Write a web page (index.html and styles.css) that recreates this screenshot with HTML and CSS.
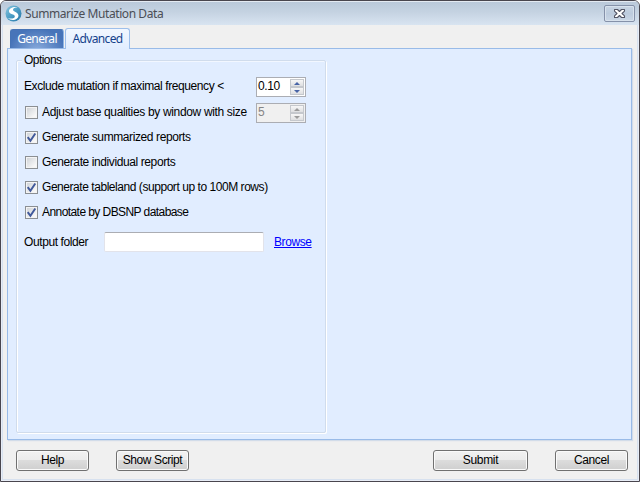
FILE: index.html
```html
<!DOCTYPE html>
<html lang="en">
<head>
<meta charset="utf-8">
<title>Summarize Mutation Data</title>
<link rel="stylesheet" href="styles.css">
</head>
<body>
<div class="window">
  <header class="titlebar">
    <svg class="logo" width="17" height="17" viewBox="0 0 17 17">
      <defs><linearGradient id="lg" x1="0" y1="0" x2="1" y2="1"><stop offset="0" stop-color="#8cc7df"/><stop offset=".5" stop-color="#4b9dc5"/><stop offset="1" stop-color="#2877a6"/></linearGradient></defs>
      <circle cx="8.5" cy="8.5" r="8" fill="url(#lg)"/>
      <path d="M12.5 2.2C8 1.3 3.6 3.6 4 6.5C4.5 9.7 10 8.9 9.8 11.4C9.7 13.2 7 14.3 2.5 13.1C7.5 17.1 14 14.2 13.4 10.3C12.8 6.7 7.9 7.1 8 4.8C8.1 3.3 9.7 2.4 12.5 2.2Z" fill="#fff"/>
    </svg>
    <h1 class="title">Summarize Mutation Data</h1>
    <button class="close" aria-label="Close">
      <svg width="13" height="11" viewBox="0 0 13 11"><path d="M1.5 1.5h3l2 2 2-2h3v1.7L9 5.5l2.5 2.3v1.7h-3l-2-2-2 2h-3V7.8L4 5.5 1.5 3.2Z" fill="#fff" stroke="#535666" stroke-width="1.1" stroke-linejoin="round"/></svg>
    </button>
  </header>
  <nav class="tabs">
    <div class="tab general"><span>General</span></div>
    <div class="tab advanced"><span>Advanced</span></div>
  </nav>
  <main class="panel">
    <fieldset class="options">
      <legend><span>Options</span></legend>
      <div class="row first">
        <span class="text exclude">Exclude mutation if maximal frequency &lt;</span>
        <div class="spinner"><span class="value">0.10</span><span class="arrows"><i class="up"></i><i class="down"></i></span></div>
      </div>
      <div class="row second">
        <span class="check"></span><span class="text adjust">Adjust base qualities by window with size</span>
        <div class="spinner disabled"><span class="value">5</span><span class="arrows"><i class="up"></i><i class="down"></i></span></div>
      </div>
      <div class="row third"><span class="check"><svg viewBox="0 0 9 9"><path d="M1.4 4.2 3.6 7.2 7.6 1.2"/></svg></span><span class="text">Generate summarized reports</span></div>
      <div class="row"><span class="check"></span><span class="text">Generate individual reports</span></div>
      <div class="row"><span class="check"><svg viewBox="0 0 9 9"><path d="M1.4 4.2 3.6 7.2 7.6 1.2"/></svg></span><span class="text tableland">Generate tableland (support up to 100M rows)</span></div>
      <div class="row"><span class="check"><svg viewBox="0 0 9 9"><path d="M1.4 4.2 3.6 7.2 7.6 1.2"/></svg></span><span class="text annotate">Annotate by DBSNP database</span></div>
      <div class="row output">
        <span class="text folder">Output folder</span><input class="field" type="text" aria-label="Output folder"><a class="browse" href="#">Browse</a>
      </div>
    </fieldset>
  </main>
  <footer class="actions">
    <button class="button">Help</button>
    <button class="button script">Show Script</button>
    <button class="button submit">Submit</button>
    <button class="button cancel">Cancel</button>
  </footer>
</div>
</body>
</html>
```
FILE: styles.css
```css
* { box-sizing: border-box; }
body { margin: 0; background: #fff; font: 12px/14px "Liberation Sans", Arial, sans-serif; letter-spacing: -.4px; color: #000; overflow: hidden; }
.window { width: 640px; height: 482px; border: 1px solid #49464e; border-radius: 6px 6px 0 0; background: #f0f0f0; box-shadow: inset 0 0 0 1px #e8edf6, inset 0 0 0 2px #d7e1ef; overflow: hidden; }
.titlebar { height: 24px; display: flex; align-items: center; padding: 0 4px 1px 4px; background: linear-gradient(#bac9da, #c5d3e2 45%, #d8e4f1); border-top: 1px solid #e4eaf2; }
.logo { flex: none; }
.title { margin: 2px 0 0 3px; font: 12px/16px "Noto Sans", sans-serif; letter-spacing: -.42px; color: #4b4e55; flex: 1; }
.close { width: 31px; height: 17px; padding: 0; display: flex; align-items: center; justify-content: center; border: 1px solid #8591a9; border-radius: 2px; background: linear-gradient(#c8d5e4, #bccbdd 50%, #cad7e6); box-shadow: inset 0 0 0 1px #d8e2ed; margin: 0; }
.tabs { height: 23px; display: flex; align-items: flex-end; padding-left: 9px; }
.tab { display: flex; align-items: center; justify-content: center; border: 1px solid; border-bottom: 0; border-radius: 3px 3px 0 0; font: 12px/16px "Noto Sans", sans-serif; letter-spacing: -.65px; }
.general { width: 54px; height: 19px; color: #fff; border-color: #4673b5; background: radial-gradient(ellipse at 50% 110%, #88aadb, #4774b9 75%); border-right-color: #8eb4e4; margin-right: 1px; }
.advanced { width: 65px; height: 21px; margin-bottom: -1px; color: #15428b; border-color: #9dbfeb; background: linear-gradient(#f2f7ff, #e1edff); position: relative; }
.panel { width: 625px; height: 392px; margin-left: 6px; padding: 4px 0 0 8px; border: 1px solid #99bbe8; background: #e1edff; box-shadow: 1px 1px 1px #d2dce9; }
.options { width: 310px; height: 380px; margin: 0; padding: 9px 0 0 7px; border: 1px solid #d0dcec; border-radius: 2px; box-shadow: inset 1px 0 #fff, inset 0 1px #f2f7ff, 1px 1px #fff; min-width: 0; }
.options legend { margin-left: -2px; padding: 0 2px; height: 14px; background: #e1edff; letter-spacing: -.55px; }
.row { display: flex; align-items: center; height: 25px; }
.row.first { height: 26px; margin-top: -2px; }
.row.second { height: 26px; }
.row.third { margin-top: -1px; }
.text { white-space: nowrap; padding-bottom: 2px; }
.exclude { width: 232px; letter-spacing: -.41px; }
.adjust { width: 214px; letter-spacing: -.34px; }
.second .check { margin-bottom: 2px; }
.tableland { letter-spacing: -.45px; }
.annotate { letter-spacing: -.57px; }
.check { flex: none; width: 13px; height: 13px; margin: 0 4px 0 1px; border: 1px solid #8b8f93; background: linear-gradient(135deg, #ccd0d5, #f7f7f7 80%); box-shadow: inset 0 0 0 1px #f4f4f4; display: flex; }
.check svg { width: 11px; height: 11px; }
.check path { fill: none; stroke: #41599b; stroke-width: 1.6; }
.spinner { display: flex; justify-content: space-between; width: 50px; height: 20px; border: 1px solid #abadb3; background: #fff; padding: 1px; }
.value { letter-spacing: -.4px; }
.arrows { display: flex; flex-direction: column; width: 14px; }
.arrows i { flex: 1; display: flex; align-items: center; justify-content: center; border: 1px solid #c5c8cd; background: linear-gradient(#f7f7f7, #dedfe1); }
.arrows i::after { content: ""; border: 3px solid transparent; }
.up::after { border-top: 0 !important; border-bottom-color: #4965a6 !important; }
.down::after { border-bottom: 0 !important; border-top-color: #4965a6 !important; }
.disabled { background: #f0f0f0; color: #858585; }
.disabled .up::after { border-bottom-color: #9b9b9b !important; }
.disabled .down::after { border-top-color: #9b9b9b !important; }
.output { height: 33px; }
.folder { width: 80px; padding-bottom: 0; letter-spacing: -.4px; }
.field { width: 160px; height: 20px; padding: 1px 3px; border: 1px solid #e2e3ea; border-top-color: #abadb3; border-radius: 2px; background: #fff; font: inherit; }
.browse { margin-left: 10px; color: #00f; }
.actions { display: flex; padding: 10px 11px 0 15px; }
.button { width: 73px; height: 21px; padding: 0 0 1px; border: 1px solid #707070; border-radius: 3px; background: linear-gradient(#f2f2f2, #ebebeb 49%, #dcdcdc 50%, #cfcfcf); box-shadow: inset 0 0 0 1px #fafafa; font: inherit; letter-spacing: inherit; color: #000; }
.script { margin-left: 27px; }
.submit { width: 95px; margin-left: auto; letter-spacing: -.3px; }
.cancel { margin-left: 27px; }
```
